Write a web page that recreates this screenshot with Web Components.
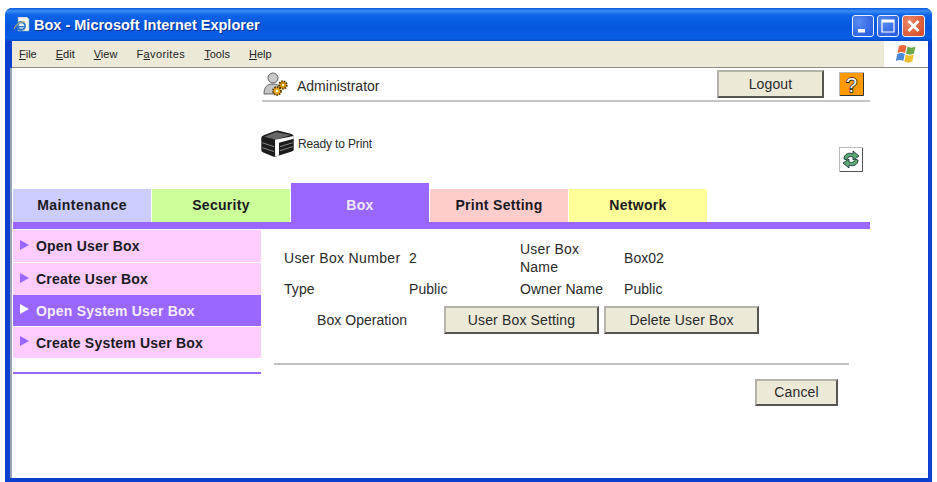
<!DOCTYPE html>
<html lang="en"><head><meta charset="utf-8"><title>Box - Microsoft Internet Explorer</title>
<style>html,body{margin:0;padding:0;background:#fff;overflow:hidden}body{font:14px "Liberation Sans",Arial,sans-serif;color:#2a2a2a}</style>
</head><body>
<xp-window caption="Box - Microsoft Internet Explorer">
  <device-header user="Administrator" status="Ready to Print"></device-header>
  <tab-bar>
    <tab-item color="#ccccff" style="letter-spacing:.45px">Maintenance</tab-item>
    <tab-item color="#ccff99">Security</tab-item>
    <tab-item active color="#9966ff">Box</tab-item>
    <tab-item color="#ffcccc">Print Setting</tab-item>
    <tab-item color="#ffff99">Network</tab-item>
  </tab-bar>
  <main-area>
    <side-menu slot="side">
      <side-item>Open User Box</side-item>
      <side-item>Create User Box</side-item>
      <side-item active>Open System User Box</side-item>
      <side-item>Create System User Box</side-item>
    </side-menu>
    <box-detail slot="content"></box-detail>
  </main-area>
</xp-window>
<script>
function def(name, css, html){
  customElements.define(name, class extends HTMLElement{
    constructor(){super();this.attachShadow({mode:'open'});}
    connectedCallback(){
      this.shadowRoot.innerHTML='<style>'+css+'</style>'+(typeof html==='function'?html(this):html);
    }
  });
}
def('xp-button',`
 :host{display:inline-block;box-sizing:border-box}
 button{display:block;width:100%;height:100%;box-sizing:border-box;background:#ece9d8;color:#2a2a2a;font:14px "Liberation Sans",Arial,sans-serif;letter-spacing:.15px;padding:0 0 1px;
 border:2px solid;border-color:#b4b3aa #55544e #55544e #b4b3aa;}
`,`<button><slot></slot></button>`);
def('xp-window',`
 :host{box-sizing:border-box;width:927px;height:474px;margin:8px 0 0 5px;background:#0a3fd0;border-radius:7px 7px 0 0;padding:0 4px 4px 5px;display:flex;flex-direction:column}
 .title{flex:none;height:33px;margin:0 -4px 0 -5px;border-radius:7px 7px 0 0;background:linear-gradient(#0a5be0 0,#3a8cf5 3px,#0d63e8 7px,#0556dd 20px,#0a5fe6 30px,#0349c8 33px);display:flex;align-items:center;padding:3px 7px 0 8px;box-sizing:border-box;color:#fff}
 .cap{font:bold 14.5px "Liberation Sans",Arial,sans-serif;margin-left:4px;margin-top:-3px;flex:1;text-shadow:1px 1px 0 #0a2f90}
 .ie{margin-top:-3px}
 .wb{width:22px;height:22px;box-sizing:border-box;border:1px solid #e8f0ff;border-radius:3px;margin-left:3px;background:radial-gradient(circle at 30% 30%,#5a8cf0,#2a5fe0 80%);display:block}
 .wb.x{background:radial-gradient(circle at 30% 30%,#ec8a6a,#d8502c 80%);width:23px}
 .menu{flex:none;height:27px;box-sizing:border-box;display:flex;background:#ece9d8;border-bottom:1px solid #8e8c80;margin-left:2px}
 .items{flex:1;display:flex;align-items:center;padding-left:7px;font:11px "Liberation Sans",Arial,sans-serif;color:#222;gap:19px}
 .fav{letter-spacing:.4px}
 .flag{width:44px;background:#fff;display:flex;align-items:center;justify-content:center;box-sizing:border-box;padding-left:2px}
 .body{flex:1;min-height:0;background:#fff;border-left:2px solid #9aa3b8;overflow:hidden}
`,h=>`
 <div class="title">
  <svg class="ie" width="17" height="15" viewBox="0 0 17 15"><path d="M5 0h9l2 2v12H5z" fill="#f4f4f0" stroke="#8aa" stroke-width=".6"/><circle cx="8" cy="9" r="5" fill="#2d78c8"/><circle cx="8.500" cy="9" r="2.700" fill="#e8f2fa"/><path d="M5.500 9h6v1.400h-6z" fill="#2d78c8"/><path d="M1 12c2-5 7-8 11-7" stroke="#e8c050" stroke-width="1" fill="none"/></svg>
  <span class="cap">${h.getAttribute('caption')}</span>
  <svg class="wb" viewBox="0 0 20 20"><rect x="5" y="13" width="7" height="3.500" fill="#fff"/></svg>
  <svg class="wb" viewBox="0 0 20 20"><path d="M4 4h12v12H4z" fill="none" stroke="#fff" stroke-width="1.200"/><path d="M4 4h12v2.500H4z" fill="#fff"/></svg>
  <svg class="wb x" viewBox="0 0 20 20"><path d="M5 5l10 10M15 5L5 15" stroke="#fff" stroke-width="2.600"/></svg>
 </div>
 <div class="menu"><div class="items"><span><u>F</u>ile</span><span><u>E</u>dit</span><span><u>V</u>iew</span><span class="fav">F<u>a</u>vorites</span><span><u>T</u>ools</span><span><u>H</u>elp</span></div>
  <div class="flag"><svg width="22" height="22" viewBox="0 0 22 22"><path d="M3 3c2.500-1.500 5-1.500 7.500 0l-1.500 7c-2.500-1.500-5-1.500-7.500 0z" fill="#e8663a"/><path d="M11.500 3.500c2.500 1.500 5 1.500 8 0l-1.500 7c-3 1.500-5.500 1.500-8 0z" fill="#6aa84a"/><path d="M1.300 11c2.500-1.500 5-1.500 7.500 0l-1.500 7c-2.500-1.500-5-1.500-7.500 0z" fill="#4a88d8"/><path d="M9.800 11.500c2.500 1.500 5 1.500 8 0l-1.500 7c-3 1.500-5.500 1.500-8 0z" fill="#f0c030"/></svg></div></div>
 <div class="body"><slot></slot></div>
`);
def('device-header',`
 :host{display:block;padding-left:250px;width:608px}
 .r1{height:32px;display:flex;align-items:center;border-bottom:2px solid #c4c4c4;padding-left:1px;padding-right:6px}
 .u{margin-left:9px;margin-top:3px}
 .r1 xp-button{margin-left:auto;width:107px;height:28px}
 .h{margin-left:15px;margin-top:-1px}
 .r2{height:81px;display:flex;align-items:flex-start;padding-right:7px}
 .p{margin-top:28px;display:flex;align-items:center;gap:4px;font-size:12px;letter-spacing:-.15px}
 .rf{margin-left:auto;margin-top:45px}
`,h=>`
 <div class="r1">
  <svg width="25" height="24" viewBox="0 0 25 24"><circle cx="10" cy="6" r="5" fill="#c8c8c8" stroke="#555" stroke-width=".9"/><path d="M1 22c0-7 3-10 9-10 3 0 6 1 7 3l-7 7z" fill="#c4c4c4" stroke="#555" stroke-width=".9"/><circle cx="14" cy="19" r="4" fill="#e6a818" stroke="#5a3c00" stroke-width="1.800" stroke-dasharray="1.600 1"/><circle cx="14" cy="19" r="1.200" fill="#fff"/><circle cx="20" cy="13" r="3.800" fill="#d89810" stroke="#5a3c00" stroke-width="1.800" stroke-dasharray="1.600 1"/><circle cx="20" cy="13" r="1" fill="#fff"/></svg>
  <span class="u">${h.getAttribute('user')}</span>
  <xp-button>Logout</xp-button>
  <svg class="h" width="25" height="24" viewBox="0 0 25 24"><rect x=".5" y=".5" width="24" height="23" fill="#ff9900" stroke="#bbb"/><path d="M24.500 1v22.500H1" fill="none" stroke="#333"/><text x="12.500" y="19.500" text-anchor="middle" font-family="Liberation Sans" font-size="20" fill="#fff" stroke="#222" stroke-width="1.600" paint-order="stroke">?</text></svg>
 </div>
 <div class="r2">
  <div class="p" style="margin-left:-1px"><svg width="33" height="27" viewBox="0 0 33 27.500"><path d="M0 8Q0 6 3 5L14 1Q16 0 19 1L31 4Q33 5 33 7V20Q33 21 31 22L15 27Q14 27.500 12 27L2 23Q0 22 0 20Z" fill="#1c1c1c"/><path d="M3 7L15 2 30 5 15 10Z" fill="#666"/><path d="M14 10L33 6V9L18 13V26L14 27Z" fill="#fff"/><path d="M1 13L13 17M1 18L13 22M19 17L32 13M19 21L32 17" stroke="#888" stroke-width="1"/></svg><span>${h.getAttribute('status')}</span></div>
  <svg class="rf" width="24" height="25" viewBox="0 0 24 25"><rect x=".5" y=".5" width="23" height="24" fill="#fff" stroke="#bbb"/><path d="M23.500 1v23.500H1" fill="none" stroke="#555"/><path d="M5 12c0-5 5-7 9-5V4l6 5-6 4v-3c-3-1-6 0-6 3z" fill="#5aaa70" stroke="#123" stroke-width=".8"/><path d="M19 13c0 5-5 7-9 5v3l-6-5 6-4v3c3 1 6 0 6-3z" fill="#5aaa70" stroke="#123" stroke-width=".8"/></svg>
 </div>
`);
def('tab-bar',`
 :host{display:flex;align-items:flex-end;gap:1px;width:857px;height:46px;box-sizing:border-box;margin-left:1px;border-bottom:7px solid #9966ff}
`,`<slot></slot>`);
def('tab-item',`
 :host{display:flex;box-sizing:border-box;flex:none;width:138px;height:33px;align-items:center;justify-content:center;font:bold 14px "Liberation Sans",Arial,sans-serif;letter-spacing:.3px;color:#1a1a22;background:var(--c);padding-bottom:1px}
 :host([active]){height:39px;color:#f0e8ff;padding-bottom:0;padding-top:5px}
`,h=>{h.style.setProperty('--c',h.getAttribute('color'));return `<slot></slot>`;});
def('main-area',`
 :host{display:flex;margin-left:1px}
 .s{flex:none;width:248px}
 .c{flex:none}
`,`<div class="s"><slot name="side"></slot></div><div class="c"><slot name="content"></slot></div>`);
def('side-menu',`
 :host{display:flex;flex-direction:column;gap:1px;padding-top:1px;padding-bottom:14px;border-bottom:2px solid #9966ff}
`,`<slot></slot>`);
def('side-item',`
 :host{display:flex;align-items:center;box-sizing:border-box;height:32px;background:#ffccff;color:#1a1a22;font:bold 14px "Liberation Sans",Arial,sans-serif;letter-spacing:.2px;padding:0 0 0 7px;gap:7px}
 :host([active]){background:#9966ff;color:#f4ecff;margin-top:-1px;height:31px}
 :host(:last-child){height:31px}
 i{display:block;width:0;height:0;border-left:9px solid #9966ff;border-top:5px solid transparent;border-bottom:5px solid transparent;margin-top:-3px}
 :host([active]) i{border-left-color:#fff}
`,`<i></i><slot></slot>`);
def('box-detail',`
 :host{display:block;width:600px;letter-spacing:.05px}
 .g{display:grid;grid-template-columns:125px 111px 104px auto;grid-template-rows:31px 32px;margin-left:23px;margin-top:13px;align-items:center;line-height:18px}
 .wide{letter-spacing:.35px}
 .ub{letter-spacing:.2px}
 .ops{display:flex;align-items:center;margin-top:1px;height:28px;margin-left:24px}
 .ops span{margin-left:32px;width:127px}
 .ops xp-button{width:155px;height:28px;margin-right:5px}
 hr{margin:29px 0 0 13px;width:575px;height:2px;border:0;background:#c0c0c0}
 .a{display:flex;justify-content:flex-end;margin-top:14px;width:577px}
 .a xp-button{width:83px;height:27px}
`,`
 <div class="g"><span class="wide">User Box Number</span><span>2</span><span class="ub">User Box<br>Name</span><span>Box02</span>
 <span>Type</span><span>Public</span><span>Owner Name</span><span>Public</span></div>
 <div class="ops"><span>Box Operation</span><xp-button>User Box Setting</xp-button><xp-button>Delete User Box</xp-button></div>
 <hr>
 <div class="a"><xp-button>Cancel</xp-button></div>
`);
</script>
</body></html>
